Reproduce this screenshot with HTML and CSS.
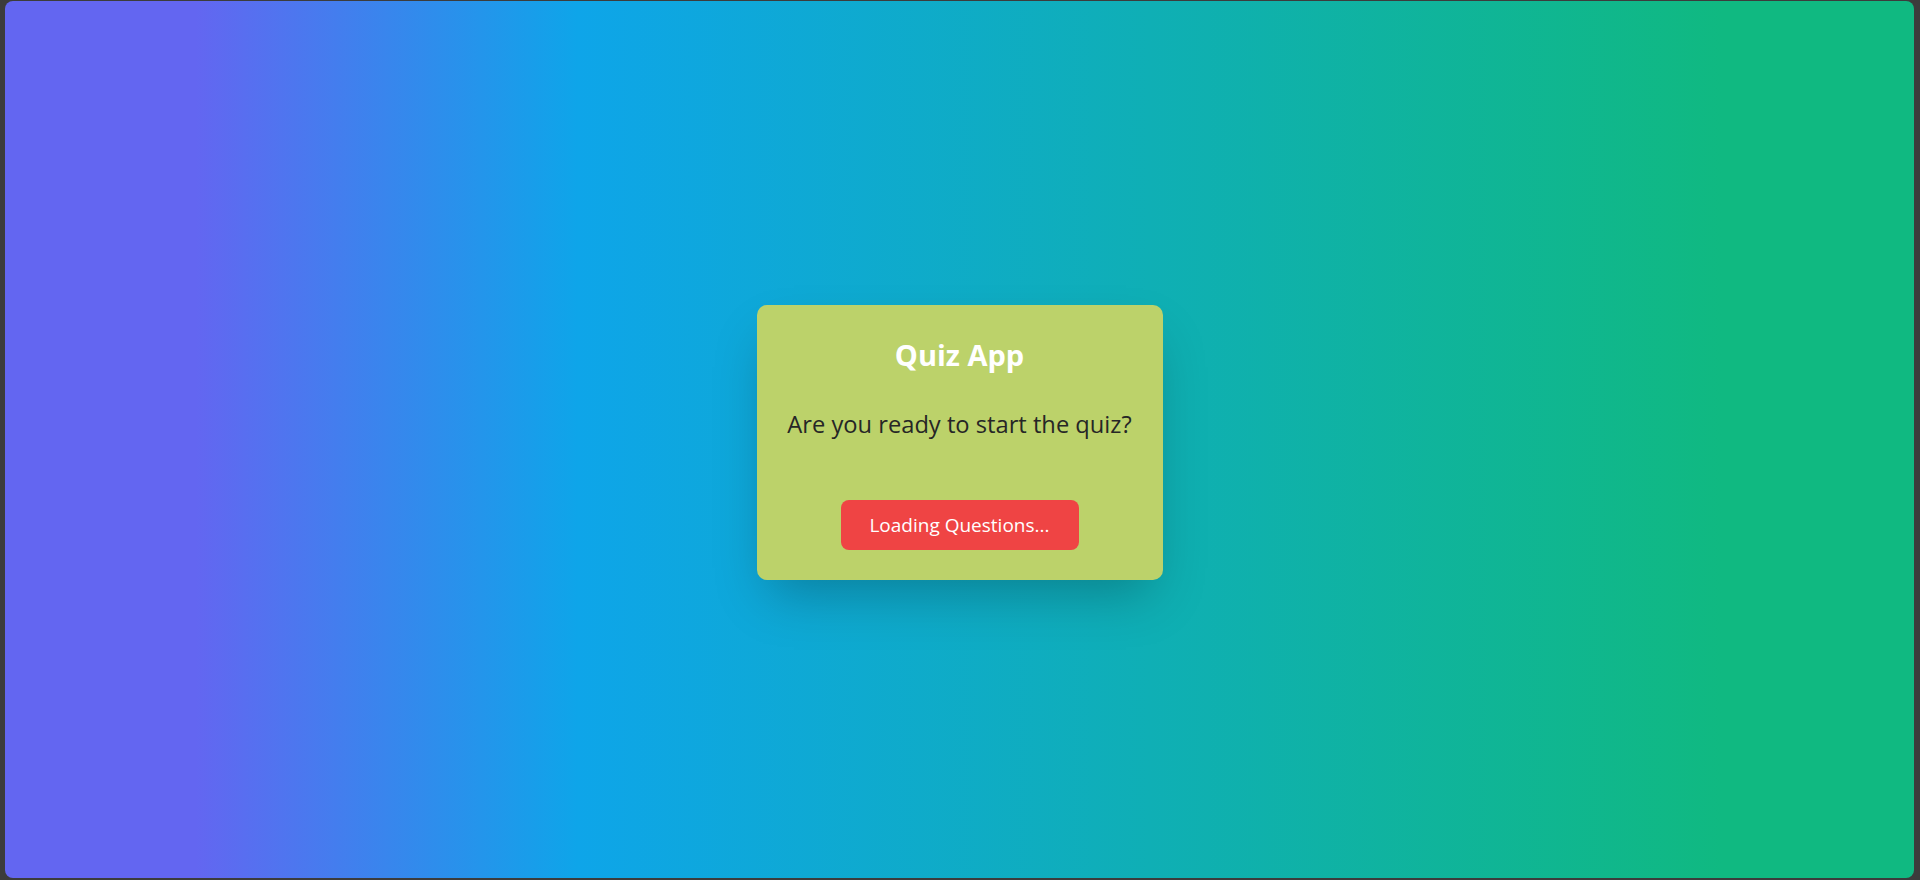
FILE: index.html
```html
<!DOCTYPE html>
<html lang="en">
<head>
<meta charset="utf-8">
<title>Quiz App</title>
<link rel="stylesheet" href="styles.css">
</head>
<body>
<main class="stage">
  <section class="card">
    <h1 class="title">Quiz App</h1>
    <p class="question">Are you ready to start the quiz?</p>
    <button class="start-btn" type="button">Loading Questions...</button>
  </section>
</main>
</body>
</html>
```

FILE: styles.css
```css
* { box-sizing: border-box; }
html, body { height: 100%; }
body {
  margin: 0;
  background: #3c3c3c;
  padding: 1px 6px 2px 5px;
  font-family: "Segoe UI", "Open Sans", "Noto Sans", sans-serif;
}
.stage {
  height: 100%;
  border-radius: 8px;
  background: linear-gradient(to right, #6366f1 10%, #0ea5e9 30%, #10b981 90%);
  display: flex;
  align-items: center;
  justify-content: center;
}
.card {
  width: 406px;
  height: 275px;
  margin-top: 6px;
  padding: 30px 30px 30px;
  background: #bcd26a;
  border-radius: 10px;
  box-shadow: 0 25px 50px -12px rgba(0, 0, 0, 0.25);
  display: flex;
  flex-direction: column;
  align-items: center;
  text-align: center;
}
.title {
  margin: 2px 0 0;
  font-size: 29px;
  line-height: 36px;
  font-weight: 700;
  color: #ffffff;
}
.question {
  margin: 35px 0 0;
  font-size: 23.7px;
  line-height: 32px;
  color: #262626;
  white-space: nowrap;
}
.start-btn {
  margin-top: 60px;
  width: 238px;
  height: 50px;
  border: none;
  border-radius: 8px;
  background: #ef4444;
  color: #ffffff;
  font-family: inherit;
  font-size: 19px;
  line-height: 28px;
  padding: 0;
}
```
